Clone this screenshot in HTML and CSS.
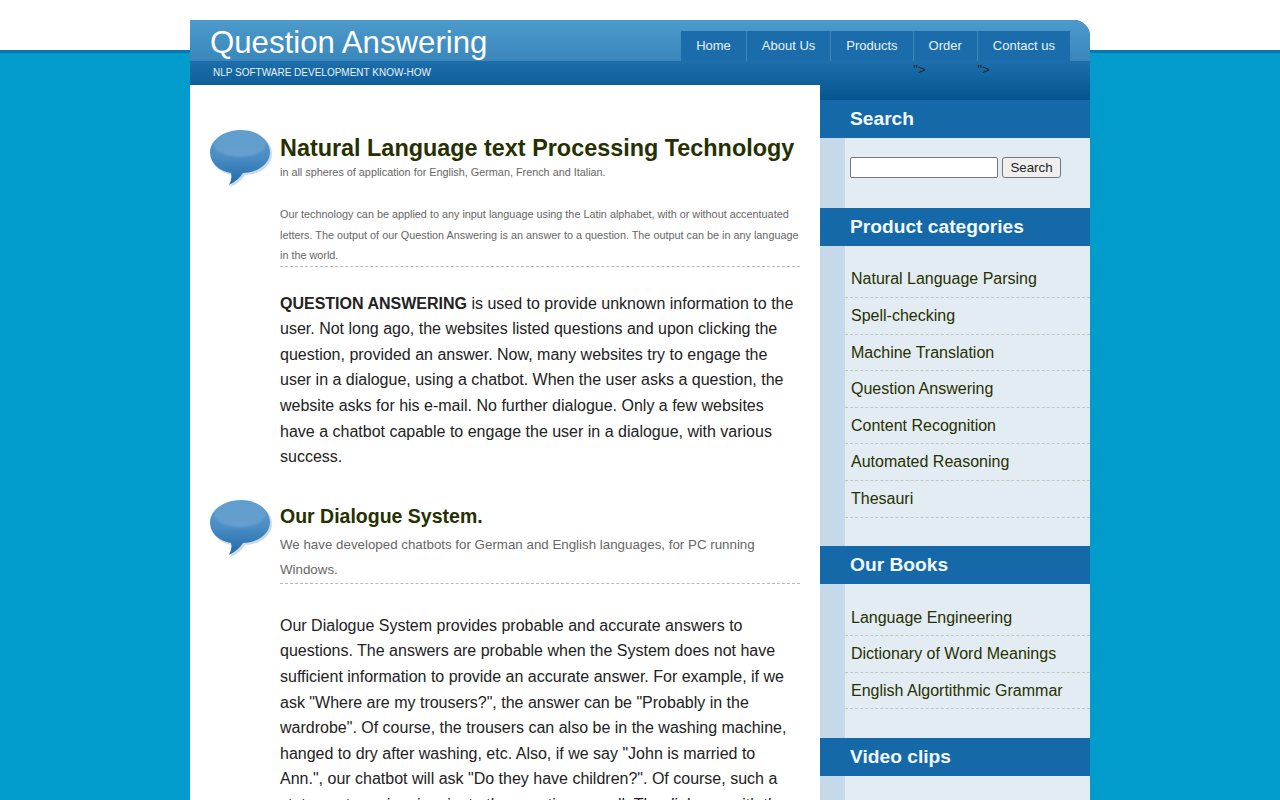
FILE: index.html
```html
<!DOCTYPE html>
<html lang="en">
<head>
<meta charset="utf-8">
<title>Question Answering</title>
<link rel="stylesheet" href="styles.css">
</head>
<body>
<div class="wrapper">
  <header class="header">
    <div class="header-top">
      <div class="logo">Question Answering</div>
      <ul class="nav">
        <li><a href="#">Home</a></li>
        <li><a href="#">About Us</a></li>
        <li><a href="#">Products</a></li>
        <li><a href="#">Order</a><span class="stray">"&gt;</span></li>
        <li><a href="#">Contact us</a><span class="stray">"&gt;</span></li>
      </ul>
    </div>
    <div class="tagline">NLP SOFTWARE DEVELOPMENT KNOW-HOW</div>
  </header>
  <div class="columns">
    <main class="main">
      <section class="post">
        <svg class="bubble" viewBox="0 0 62 57" aria-hidden="true"><use href="#bubble-shape"/></svg>
        <div class="post-body">
          <h1>Natural Language text Processing Technology</h1>
          <p class="sub">in all spheres of application for English, German, French and Italian.</p>
          <p class="intro">Our technology can be applied to any input language using the Latin alphabet, with or without accentuated letters. The output of our Question Answering is an answer to a question. The output can be in any language in the world.</p>
          <p class="text"><strong>QUESTION ANSWERING</strong> is used to provide unknown information to the user. Not long ago, the websites listed questions and upon clicking the question, provided an answer. Now, many websites try to engage the user in a dialogue, using a chatbot. When the user asks a question, the website asks for his e-mail. No further dialogue. Only a few websites have a chatbot capable to engage the user in a dialogue, with various success.</p>
        </div>
      </section>
      <section class="post post-second">
        <svg class="bubble" viewBox="0 0 62 57" aria-hidden="true"><use href="#bubble-shape"/></svg>
        <div class="post-body">
          <h2>Our Dialogue System.</h2>
          <p class="lead">We have developed chatbots for German and English languages, for PC running Windows.</p>
          <p class="text text-second">Our Dialogue System provides probable and accurate answers to questions. The answers are probable when the System does not have sufficient information to provide an accurate answer. For example, if we ask "Where are my trousers?", the answer can be "Probably in the wardrobe". Of course, the trousers can also be in the washing machine, hanged to dry after washing, etc. Also, if we say "John is married to Ann.", our chatbot will ask "Do they have children?". Of course, such a statement requires inquiry to the question overall. The dialogue with the</p>
        </div>
      </section>
    </main>
    <aside class="sidebar">
      <h3>Search</h3>
      <form class="search">
        <input class="search-input" type="text" aria-label="Search">
        <button class="search-button" type="button">Search</button>
      </form>
      <h3>Product categories</h3>
      <ul class="links">
        <li><a href="#">Natural Language Parsing</a></li>
        <li><a href="#">Spell-checking</a></li>
        <li><a href="#">Machine Translation</a></li>
        <li><a href="#">Question Answering</a></li>
        <li><a href="#">Content Recognition</a></li>
        <li><a href="#">Automated Reasoning</a></li>
        <li><a href="#">Thesauri</a></li>
      </ul>
      <h3>Our Books</h3>
      <ul class="links">
        <li><a href="#">Language Engineering</a></li>
        <li><a href="#">Dictionary of Word Meanings</a></li>
        <li><a href="#">English Algortithmic Grammar</a></li>
      </ul>
      <h3>Video clips</h3>
      <div class="video"></div>
    </aside>
  </div>
</div>
<svg class="defs" width="0" height="0" aria-hidden="true">
  <defs>
    <linearGradient id="bubble-fill" x1="0" y1="0" x2="0" y2="1">
      <stop offset="0" stop-color="#5d9dcd"/>
      <stop offset="0.5" stop-color="#4a8cc4"/>
      <stop offset="1" stop-color="#1f6aa8"/>
    </linearGradient>
    <linearGradient id="bubble-shine" x1="0" y1="0" x2="0" y2="1">
      <stop offset="0" stop-color="#8ab8dc" stop-opacity="0.1"/>
      <stop offset="1" stop-color="#8ab8dc" stop-opacity="0.45"/>
    </linearGradient>
    <filter id="bubble-soft" x="-10%" y="-10%" width="120%" height="120%">
      <feGaussianBlur stdDeviation="0.8"/>
    </filter>
    <g id="bubble-shape">
      <path d="M32 2C49 2 62 11 62 24C62 36 49 45 35 45C32 50 26 55 20 57C22 53 24 49 23 45.500C10 43 1 35 1 24C1 11 15 2 32 2Z" fill="#c9dbe9"/>
      <path d="M31 0C47 0 60 10 60 22.500C60 34 47 43 33 43C30 48 25 52 19 55C21 51 22 47 21 43C9 41 0 33 0 22.500C0 10 14 0 31 0Z" fill="url(#bubble-fill)"/>
      <ellipse cx="30" cy="14" rx="26" ry="13" fill="url(#bubble-shine)" filter="url(#bubble-soft)"/>
    </g>
  </defs>
</svg>
</body>
</html>
```
FILE: styles.css
```css
* { box-sizing: border-box; }
html, body { margin: 0; padding: 0; }
body {
  background: linear-gradient(#fff 0, #fff 50px, #0778ad 50px, #0778ad 53px, #019ccc 53px);
  background-color: #019ccc;
  font-family: "Liberation Sans", Arial, sans-serif;
  color: #222;
}
.defs { position: absolute; }
.wrapper { width: 900px; margin: 0 auto; padding-top: 20px; }
.header {
  height: 80px;
  border-top-right-radius: 16px;
  background: linear-gradient(#1d6eab 41px, #04558f 80px);
  overflow: hidden;
}
.header-top {
  height: 41px;
  background: linear-gradient(#4c9bcc, #3a86bb);
  display: flex;
  justify-content: space-between;
  padding: 0 20px;
}
.logo { color: #fff; font-size: 31.2px; line-height: 45px; white-space: nowrap; }
.nav {
  list-style: none;
  display: flex;
  margin: 11px 0 0;
  padding: 0;
  height: 30px;
  font-size: 13px;
  color: #222;
}
.nav li { height: 30px; line-height: 15px; }
.nav a {
  display: block;
  height: 30px;
  line-height: 29px;
  padding: 0 15px;
  background: #1a6daa;
  color: #e8f2f9;
  text-decoration: none;
  border-left: 1px solid #3f88bd;
  margin-bottom: 1px;
}
.nav li:first-child a { border-left: 0; }
.stray { display: block; padding-left: 0.7px; }
.tagline {
  color: #e8f2f9;
  font-size: 10px;
  line-height: 12px;
  padding: 6px 0 0 23px;
}
.columns { display: flex; margin-top: -15px; position: relative; }
.main {
  width: 630px;
  background: #fff;
  padding: 45px 20px 30px;
}
.post { display: flex; gap: 8px; }
.post-second { margin-top: 30px; }
.bubble { width: 62px; height: 57px; flex: none; }
.post-body { width: 520px; }
h1 { margin: 3px 0 0; font-size: 23.4px; line-height: 30px; color: #263000; }
.sub { margin: 1px 0 0; font-size: 10.83px; line-height: 16px; color: #666; }
.intro {
  margin: 23.6px 0 0;
  font-size: 10.83px;
  line-height: 20.9px;
  color: #666;
  border-bottom: 1px dashed #bbb;
}
.text { margin: 23.4px 0 0; font-size: 16px; line-height: 25.6px; color: #222; }
h2 { margin: 3px 0 0; font-size: 19.5px; line-height: 26px; color: #263000; }
.lead {
  margin: 3px 0 0;
  padding-bottom: 1px;
  font-size: 13.33px;
  line-height: 25px;
  color: #666;
  border-bottom: 1px dashed #bbb;
}
.text-second { margin-top: 29px; }
.sidebar {
  width: 270px;
  padding-top: 15px;
  background: linear-gradient(90deg, #c6d9ea 25px, #e4ecf3 25px) 0 15px no-repeat;
}
.sidebar h3 {
  margin: 0;
  height: 38px;
  padding-left: 30px;
  background: #1569a9;
  color: #f4f8fb;
  font-size: 19.2px;
  line-height: 37px;
}
.search {
  height: 70px;
  padding: 19px 0 0 30px;
  display: flex;
  align-items: flex-start;
  gap: 4px;
}
.search-input {
  width: 148px;
  height: 21px;
  margin: 0;
  padding: 1px 2px;
  background: #fff;
  border: 1px solid #767676;
  border-radius: 2px;
}
.search-button {
  width: 59px;
  height: 21px;
  margin: 0;
  padding: 0;
  background: #efefef;
  border: 1px solid #767676;
  border-radius: 3px;
  font-family: "Liberation Sans", Arial, sans-serif;
  font-size: 13.33px;
  color: #222;
}
.links { list-style: none; margin: 15.4px 0 28.6px 25px; padding: 0; }
.links li {
  padding: 5px 0 5px 6px;
  font-size: 16px;
  line-height: 25.6px;
  border-bottom: 1px dashed #bdc7c0;
}
.links a { color: #263000; text-decoration: none; }
.video { height: 60px; }
```
